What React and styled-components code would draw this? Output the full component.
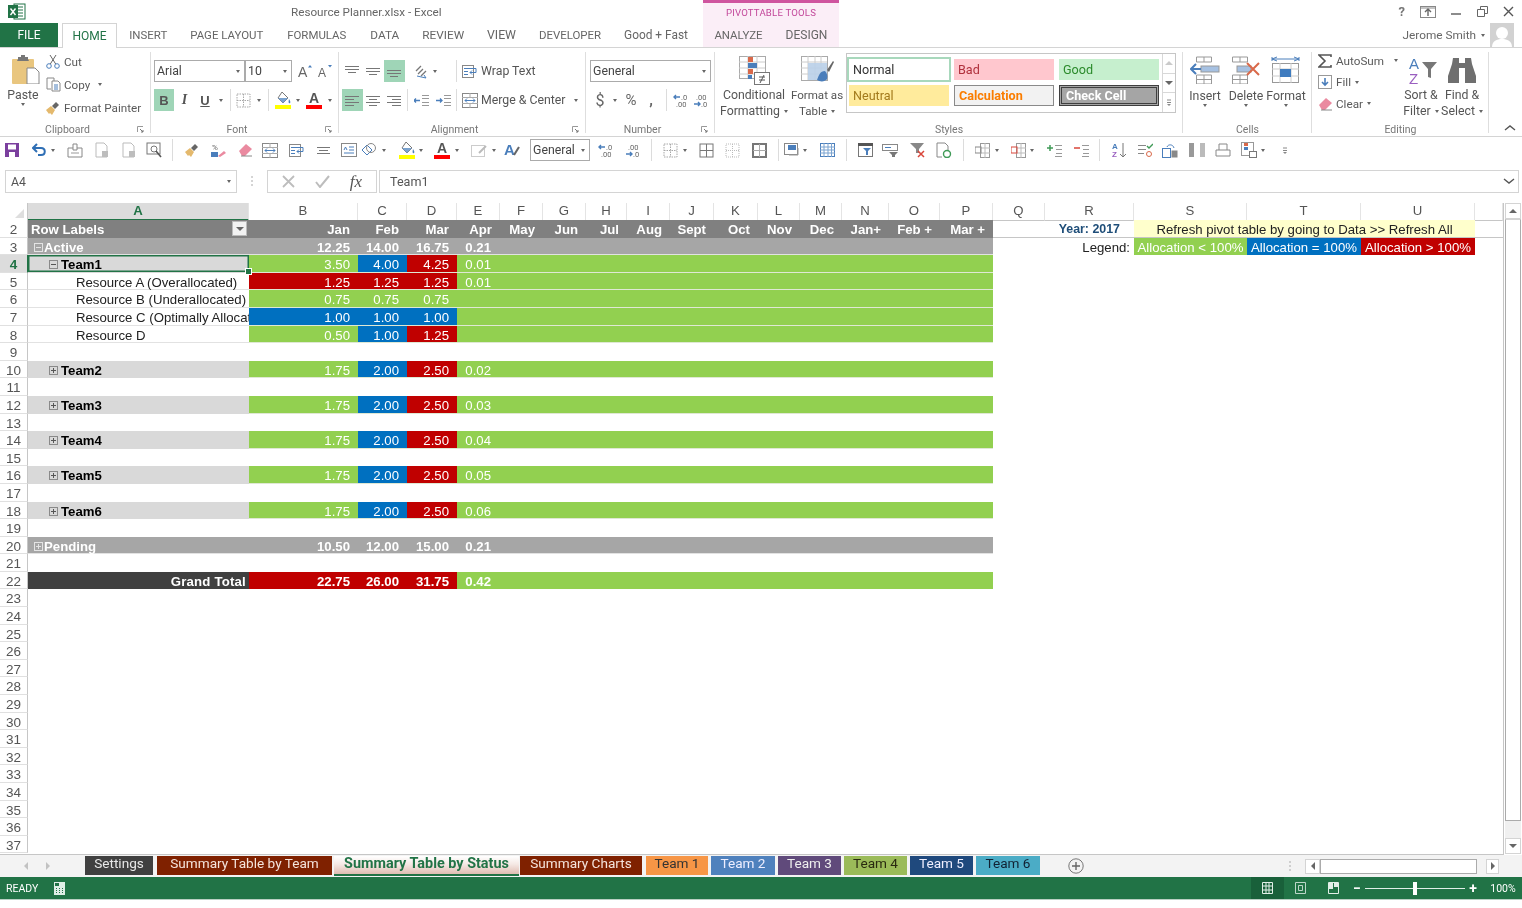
import React from 'react'
import styled, { createGlobalStyle } from 'styled-components'

const GREEN = '#217346'
const UI = '"Roboto", "Liberation Sans", sans-serif'
const CELL = '"Liberation Sans", Arial, sans-serif'
const LINE = '#d4d4d4'
const INK = '#5a5a5a'
const BLUE = '#4a7ebb'

const Global = createGlobalStyle`
  html, body { margin:0; padding:0; background:#fff; overflow:hidden; }
  * { box-sizing:border-box; }
`

const Window = styled.div`
  width:1522px;
  height:908px;
  display:flex;
  flex-direction:column;
  background:#fff;
  font-family:${UI};
  font-size:12px;
  color:${INK};
  overflow:hidden;
  filter:blur(.35px);
`

/* ---------- title + tabs ---------- */
const TitleBar = styled.div`
  height:23px;
  display:flex;
  align-items:center;
`
const AppLogo = styled.div`
  width:291px;
  padding-left:8px;
`
const Title = styled.div`
  width:412px;
  font-size:11.7px;
  color:#666;
`
const PivotLabel = styled.div`
  width:136px;
  height:23px;
  background:#fbeef7;
  border-top:3px solid #cf559f;
  color:#c2479a;
  font-size:9.6px;
  letter-spacing:.2px;
  text-align:center;
  line-height:19px;
`
const WinControls = styled.div`
  margin-left:auto;
  display:flex;
  align-items:center;
  gap:15px;
  padding-right:8px;
`
const HelpMark = styled.span`
  font-weight:700;
  font-size:13px;
  color:#777;
`
const TabBar = styled.div`
  height:25px;
  display:flex;
  border-bottom:1px solid ${LINE};
`
const FileTab = styled.div`
  width:58px;
  height:24px;
  background:${GREEN};
  color:#fff;
  font-size:12px;
  display:flex;
  align-items:center;
  justify-content:center;
  margin-right:4px;
`
const HomeTab = styled.div`
  width:55px;
  height:25px;
  background:#fff;
  color:${GREEN};
  border:1px solid ${LINE};
  border-bottom:0;
  font-size:12px;
  display:flex;
  align-items:center;
  justify-content:center;
  margin-right:1px;
`
const Tab = styled.div`
  width:${p => p.$w}px;
  flex:none;
  text-align:center;
  font-size:${p => p.$fs || 11.45}px;
  line-height:24px;
  white-space:nowrap;
  color:#666;
`
const ContextTabs = styled.div`
  display:flex;
  width:136px;
  height:24px;
  margin-left:3.5px;
  background:#fbeef7;
`
const UserBox = styled.div`
  margin-left:auto;
  display:flex;
  align-items:center;
  gap:5px;
  padding-right:8px;
  height:24px;
  color:#666;
  font-size:11.8px;
`
const Avatar = styled.div`
  width:24px;
  height:24px;
  background:#d2d2d2;
`

/* ---------- ribbon ---------- */
const Ribbon = styled.div`
  height:89px;
  display:flex;
  border-bottom:1px solid ${LINE};
`
const Group = styled.div`
  width:${p => p.$w}px;
  display:flex;
  flex-direction:column;
  position:relative;
  &::after {
    content:'';
    position:absolute;
    right:0;
    top:4px;
    bottom:3px;
    width:1px;
    background:#dedede;
  }
`
const GroupBody = styled.div`
  flex:1;
  display:flex;
  padding-left:${p => p.$pad || 0}px;
  min-height:0;
`
const GroupFoot = styled.div`
  height:17px;
  display:flex;
  align-items:flex-start;
  padding-right:${p => (p.$launch ? 1 : 0)}px;
`
const GroupLabel = styled.div`
  flex:1;
  text-align:center;
  font-size:10.5px;
  padding-top:3.5px;
  line-height:13px;
  color:#777;
`
const Launcher = styled.div`
  width:15px;
  padding-top:7px;
  padding-left:2px;
`
const Stack = styled.div`
  display:flex;
  flex-direction:column;
  gap:7px;
  padding-top:12px;
`
const ToolRow = styled.div`
  height:22px;
  display:flex;
  align-items:center;
`
const Slot = styled.div`
  width:${p => p.$w}px;
  height:22px;
  flex:none;
  margin-left:${p => p.$ml || 0}px;
  display:flex;
  align-items:center;
  justify-content:center;
  background:${p => (p.$on ? '#9fd5b7' : 'transparent')};
  color:#555;
`
const Sep = styled.div`
  width:1px;
  height:22px;
  background:#dcdcdc;
`
const Caret = styled.span`
  display:inline-block;
  width:0;
  height:0;
  flex:none;
  margin-left:${p => p.$ml || 0}px;
  border-left:2.5px solid transparent;
  border-right:2.5px solid transparent;
  border-top:3px solid #666;
  vertical-align:middle;
`
const Select = styled.div`
  width:${p => p.$w}px;
  height:${p => p.$h || 22}px;
  flex:none;
  border:1px solid #ababab;
  background:#fff;
  color:#444;
  display:flex;
  align-items:center;
  justify-content:space-between;
  padding:0 4px 0 2px;
  font-size:12.3px;
`
const Bold = styled.span`
  font-family:${CELL};
  font-size:13px;
  font-weight:700;
  color:#555;
`
const Ital = styled(Bold)`
  font-style:italic;
  font-family:"Liberation Serif", serif;
  font-size:14px;
`
const Under = styled(Bold)`
  text-decoration:underline;
`
const Symbol = styled.span`
  font-size:${p => p.$s || 14}px;
  font-weight:${p => p.$b || 400};
  color:#666;
`
const ToolText = styled.span`
  white-space:nowrap;
  color:#555;
  font-size:12.3px;
`
const BigButton = styled.div`
  width:${p => p.$w}px;
  flex:none;
  display:flex;
  flex-direction:column;
  align-items:center;
  padding-top:${p => p.$top ?? 8}px;
  font-size:${p => p.$fs || 12.3}px;
  line-height:16px;
  color:#555;
  white-space:nowrap;
`
const BigIcon = styled.div`
  height:${p => p.$h || 30}px;
  margin-bottom:2px;
  margin-left:${p => p.$ml || 0}px;
`
const SmallCol = styled.div`
  display:flex;
  flex-direction:column;
  padding-top:${p => p.$top}px;
  width:${p => p.$w}px;
`
const SmallRow = styled.div`
  height:${p => p.$h || 22}px;
  display:flex;
  align-items:center;
  gap:4px;
  white-space:nowrap;
  font-size:11.7px;
`
const SmallIcon = styled.div`
  width:14px;
  flex:none;
  display:flex;
  justify-content:center;
`
const Gallery = styled.div`
  width:330px;
  height:60px;
  margin:5px 0 0 5px;
  border:1px solid #c6c6c6;
  display:flex;
  justify-content:space-between;
  padding:5px 0 0 2px;
`
const StyleGrid = styled.div`
  display:grid;
  grid-template-columns:repeat(3,100px);
  grid-auto-rows:21px;
  gap:5px;
`
const StyleCell = styled.div`
  background:${p => p.$bg};
  color:${p => p.$color};
  font-weight:${p => (p.$bold ? 700 : 400)};
  border:${p => p.$border || 'none'};
  outline:${p => p.$outline || 'none'};
  font-size:12.6px;
  display:flex;
  align-items:center;
  padding-left:4px;
`
const GalleryScroll = styled.div`
  width:13px;
  margin:-5px 0 0 0;
  display:flex;
  flex-direction:column;
  border-left:1px solid #d8d8d8;
`
const GalleryStep = styled.div`
  flex:1;
  display:flex;
  align-items:center;
  justify-content:center;
  border-bottom:1px solid #d8d8d8;
  &:last-child { border-bottom:0; }
`
const CollapseBox = styled.div`
  flex:1;
  display:flex;
  align-items:flex-end;
  justify-content:center;
  padding:0 0 4px 9px;
`

/* ---------- quick access ---------- */
const Qat = styled.div`
  height:26px;
  display:flex;
  align-items:center;
`
const QatItem = styled.div`
  width:${p => p.$w}px;
  margin-left:${p => p.$ml}px;
  flex:none;
  display:flex;
  align-items:center;
  justify-content:center;
`

/* ---------- formula bar ---------- */
const FormulaBar = styled.div`
  height:23px;
  margin-top:7px;
  padding:0 3px 0 5px;
  display:flex;
  align-items:stretch;
`
const NameBox = styled.div`
  width:232px;
  border:1px solid ${LINE};
  display:flex;
  align-items:center;
  justify-content:space-between;
  padding:0 5px;
  font-size:12.3px;
  color:#555;
`
const Grip = styled.div`
  width:30px;
  display:flex;
  align-items:center;
  justify-content:center;
`
const FormulaBtns = styled.div`
  width:110px;
  border:1px solid ${LINE};
  display:flex;
  align-items:center;
  justify-content:space-around;
  padding:0 4px;
`
const FxMark = styled.span`
  font-family:"Liberation Serif", serif;
  font-style:italic;
  font-size:17px;
  color:#555;
`
const FormulaInput = styled.div`
  flex:1;
  margin-left:2px;
  border:1px solid ${LINE};
  display:flex;
  align-items:center;
  justify-content:space-between;
  padding:0 3px 0 10px;
  font-size:12.6px;
  color:#555;
`

/* ---------- sheet ---------- */
const SheetWrap = styled.div`
  height:652px;
  margin-top:10px;
  display:flex;
`
const Sheet = styled.div`
  width:1504px;
  border-right:1px solid #c6c6c6;
  border-bottom:1px solid #c6c6c6;
  font-family:${CELL};
  font-size:13.2px;
`
const colWidths = [221,109,49,50,43,43,43,41,43,44,44,42,42,47,51,53,52,89,113,114,114,28]
const template = `28px ${colWidths.map(w => w + 'px').join(' ')}`

const HeadRow = styled.div`
  display:grid;
  grid-template-columns:${template};
  height:17px;
`
const ColHead = styled.div`
  border-right:1px solid #e4e4e4;
  border-bottom:${p => (p.$active ? `2px solid ${GREEN}` : '1px solid #c6c6c6')};
  background:${p => (p.$active ? '#dcdcdc' : '#fff')};
  color:${p => (p.$active ? GREEN : '#555')};
  font-weight:${p => (p.$active ? 700 : 400)};
  text-align:center;
  line-height:16px;
`
const Corner = styled.div`
  border-right:1px solid #c6c6c6;
  border-bottom:1px solid #c6c6c6;
  display:flex;
  justify-content:flex-end;
  align-items:flex-end;
  padding:0 3px 2px 0;
`
const Row = styled.div`
  display:grid;
  grid-template-columns:${template};
  grid-template-rows:17.6px;
  height:17.6px;
`
const RowHead = styled.div`
  border-right:1px solid ${p => (p.$active ? GREEN : '#c6c6c6')};
  border-bottom:1px solid #e0e0e0;
  background:${p => (p.$active ? '#dcdcdc' : '#fff')};
  color:${p => (p.$active ? GREEN : '#555')};
  font-weight:${p => (p.$active ? 700 : 400)};
  font-size:13.5px;
  text-align:center;
  line-height:19px;
  overflow-x:clip;
`
const Cell = styled.div`
  position:relative;
  background:${p => p.$bg || 'transparent'};
  color:${p => p.$color || '#333'};
  font-weight:${p => (p.$bold ? 700 : 400)};
  font-size:${p => (p.$fs ? `${p.$fs}px` : 'inherit')};
  text-align:${p => p.$align || 'right'};
  padding:${p => (p.$align === 'left' ? `0 0 0 ${p.$indent || 3}px` : p.$align === 'center' ? '0' : `0 ${p.$pr ?? 8}px 0 0`)};
  border-bottom:1px solid ${p => p.$rule || 'transparent'};
  grid-column:${p => (p.$span ? `span ${p.$span}` : 'auto')};
  line-height:19.5px;
  white-space:nowrap;
  overflow-x:clip;
  letter-spacing:${p => p.$ls || 0}px;
`
const LabelCell = styled(Cell)`
  display:flex;
  align-items:flex-start;
  gap:${p => p.$gap ?? 3}px;
  overflow-x:${p => (p.$sel ? 'visible' : 'clip')};
  box-shadow:${p => (p.$sel ? `inset 0 0 0 1.5px ${GREEN}` : 'none')};
  z-index:${p => (p.$sel ? 2 : 0)};
  &::after {
    content:${p => (p.$sel ? "''" : 'none')};
    position:absolute;
    right:-3px;
    bottom:-3px;
    width:5px;
    height:5px;
    background:${GREEN};
    border:1px solid #fff;
  }
`
const Toggle = styled.span`
  width:9px;
  height:9px;
  margin-top:5px;
  flex:none;
  border:1px solid ${p => p.$c || '#8a8a8a'};
  display:flex;
  align-items:center;
  justify-content:center;
  position:relative;
  &::before {
    content:'';
    width:5px;
    height:1px;
    background:${p => p.$c || '#555'};
  }
  &::after {
    content:${p => (p.$plus ? "''" : 'none')};
    position:absolute;
    width:1px;
    height:5px;
    background:${p => p.$c || '#555'};
  }
`
const FilterBtn = styled.span`
  position:absolute;
  right:2px;
  top:1px;
  width:15px;
  height:15px;
  background:#f2f2f2;
  border:1px solid #bbb;
  display:flex;
  align-items:center;
  justify-content:center;
`

const VScroll = styled.div`
  margin-left:1px;
  width:16px;
  height:651px;
  display:flex;
  flex-direction:column;
  background:#f0f0f0;
`
const ScrollBtn = styled.div`
  width:${p => p.$w || 16}px;
  height:${p => p.$h || 16}px;
  margin-left:${p => p.$ml || 0}px;
  flex:none;
  border:1px solid #d4d4d4;
  background:#fff;
  display:flex;
  align-items:center;
  justify-content:center;
`
const VThumb = styled.div`
  height:602px;
  flex:none;
  background:#fff;
  border:1px solid #ababab;
  border-top:1px solid #d4d4d4;
  margin-bottom:auto;
`
const Tri = styled.span`
  width:0;
  height:0;
  border-left:${p => (p.$dir === 'r' ? '4px solid #666' : p.$dir === 'l' ? '0' : '4px solid transparent')};
  border-right:${p => (p.$dir === 'l' ? '4px solid #666' : p.$dir === 'r' ? '0' : '4px solid transparent')};
  border-top:${p => (p.$dir === 'd' ? '4px solid #666' : p.$dir === 'u' ? '0' : '4px solid transparent')};
  border-bottom:${p => (p.$dir === 'u' ? '4px solid #666' : p.$dir === 'd' ? '0' : '4px solid transparent')};
  opacity:${p => (p.$dim ? 0.35 : 1)};
`

/* ---------- sheet tabs ---------- */
const SheetTabs = styled.div`
  height:22px;
  background:#f3f3f3;
  display:flex;
  align-items:flex-start;
  padding-top:1px;
`
const TabNav = styled.div`
  width:85px;
  height:20px;
  display:flex;
  align-items:center;
  justify-content:center;
  gap:18px;
  padding-right:12px;
`
const SheetTab = styled.div`
  width:${p => p.$w}px;
  margin-right:${p => p.$gap ?? 3}px;
  height:${p => (p.$active ? 20 : 19)}px;
  flex:none;
  background:${p => p.$bg};
  color:${p => p.$color};
  font-weight:${p => (p.$active ? 700 : 400)};
  border-bottom:${p => (p.$active ? `2px solid ${GREEN}` : '0')};
  font-size:${p => (p.$active ? 14.4 : 13.6)}px;
  text-align:center;
  line-height:15px;
  white-space:nowrap;
`
const AddSheet = styled.div`
  margin-left:25px;
  width:16px;
  height:20px;
  display:flex;
  align-items:center;
`
const HScrollArea = styled.div`
  margin-left:auto;
  display:flex;
  align-items:center;
  height:20px;
  padding-right:23px;
`
const HThumb = styled.div`
  width:157px;
  height:15px;
  background:#fff;
  border:1px solid #ababab;
`

/* ---------- status bar ---------- */
const StatusBar = styled.div`
  height:23px;
  background:${GREEN};
  border-bottom:1px solid #b9cfc3;
  color:#fff;
  display:flex;
  align-items:center;
  font-size:10.5px;
  padding-left:6px;
`
const ReadyText = styled.span`
  width:48px;
`
const ViewBtn = styled.div`
  width:33px;
  height:22px;
  display:flex;
  align-items:center;
  justify-content:center;
  background:${p => (p.$on ? '#19603a' : 'transparent')};
`
const ViewGroup = styled.div`
  display:flex;
  margin-right:2px;
`
const StatusRight = styled.div`
  margin-left:auto;
  display:flex;
  align-items:center;
  height:22px;
`
const ZoomSign = styled.span`
  width:10px;
  font-size:14px;
  font-weight:700;
  text-align:center;
`
const ZoomTrack = styled.div`
  width:100px;
  height:1px;
  margin:0 3px;
  background:#dfeee6;
  position:relative;
  &::after {
    content:'';
    position:absolute;
    left:48px;
    top:-6px;
    width:4px;
    height:13px;
    background:#fff;
  }
`
const ZoomLabel = styled.span`
  width:38px;
  margin-left:6px;
  text-align:center;
  font-size:10.5px;
`

/* ---------- icons ---------- */
const Svg = styled.svg`
  display:block;
  flex:none;
`
const S = ({ w = 16, h = 16, children }) => (
  <Svg width={w} height={h} viewBox={`0 0 ${w} ${h}`} fill="none">{children}</Svg>
)
const L = '#a8a8a8'

const ExcelLogo = () => (
  <S w={18} h={17}>
    <rect x="6" y="1" width="11" height="15" fill="#fff" stroke={GREEN} />
    <path d="M10 4h5M10 7h5M10 10h5M10 13h5" stroke={GREEN} />
    <rect x="0" y="2" width="10" height="13" fill={GREEN} />
    <path d="M2.5 5.5l5 6.5M7.5 5.5l-5 6.5" stroke="#fff" strokeWidth="1.4" />
  </S>
)
const PasteIcon = () => (
  <S w={29} h={30}>
    <rect x="0" y="5" width="22" height="25" rx="1" fill="#e9c67f" />
    <path d="M6 5V3h3V1h4v2h3v2l1 2H5z" fill="#777" />
    <path d="M15 14h8l4 4v12H15z" fill="#fff" stroke="#888" />
  </S>
)
const ScissorsIcon = () => (
  <S w={14} h={15}>
    <circle cx="3" cy="12" r="2.3" stroke={BLUE} />
    <circle cx="11" cy="12" r="2.3" stroke={BLUE} />
    <path d="M4.3 10L10 1M9.7 10L4 1" stroke="#666" />
  </S>
)
const CopyIcon = () => (
  <S w={15} h={15}>
    <path d="M1 1h7v3M1 1v11h4" stroke="#888" />
    <path d="M6 4h6l2 2v8H6z" fill="#fff" stroke="#888" />
    <path d="M8 8h4M8 10h4M8 12h4" stroke={BLUE} />
  </S>
)
const PainterIcon = () => (
  <S w={14} h={14}>
    <path d="M0 9l5-4 4 4-3 5-2-2-1 1z" fill="#e4b96d" />
    <path d="M6 5l4-4 3 3-4 4z" fill="#666" />
  </S>
)
const Launch = () => (
  <S w={7} h={7}>
    <path d="M0.5 6V0.5H6" stroke="#999" />
    <path d="M3 3l3 3M6 4v2H4" stroke="#777" />
  </S>
)
const FontSizeA = ({ size, shrink }) => (
  <S w={15} h={18}>
    <text x="0" y="15" fontFamily={CELL} fontSize={size} fill="#666">A</text>
    <path d={shrink ? 'M10 3h4l-2 2.500z' : 'M10 5.500h4L12 3z'} fill={BLUE} />
  </S>
)
const Borders = ({ c = L, dash = '1.5 1' }) => (
  <S w={15} h={15}>
    <rect x="1" y="1" width="13" height="13" stroke={c} strokeDasharray={dash} />
    <path d="M7.5 1v13M1 7.5h13" stroke={c} strokeDasharray={dash} />
  </S>
)
const SolidGrid = ({ c = '#777', thick }) => (
  <S w={15} h={15}>
    <rect x="1" y="1" width="13" height="13" stroke={c} strokeWidth={thick ? 2 : 1} />
    <path d="M7.5 1v13M1 7.5h13" stroke={thick ? '#aaa' : c} />
  </S>
)
const FillIcon = () => (
  <S w={17} h={18}>
    <path d="M7 1l6 6-5 5-5-5z" fill="#fff" stroke="#777" />
    <path d="M3 7h10l-5 5z" fill="#7aa2cf" />
    <path d="M14 8c1 2 2 3 1 4s-2 0-1-4z" fill={BLUE} />
    <rect x="0" y="14" width="16" height="4" fill="#ffff00" />
  </S>
)
const FontColor = () => (
  <S w={16} h={18}>
    <text x="8" y="12" textAnchor="middle" fontFamily={CELL} fontSize="14" fontWeight="700" fill="#555">A</text>
    <rect x="0" y="14" width="16" height="4" fill="#f00" />
  </S>
)
const Lines = ({ ys, x1 = 0, x2 = 14 }) => (
  <S w={15} h={15}>
    <path d={ys.map(([y, a, b]) => `M${a ?? x1} ${y}.5H${b ?? x2}`).join('')} stroke="#777" />
  </S>
)
const AlignV = ({ at }) => <Lines ys={[at, at + 3, at + 6].map((y, i) => [y, i === 2 ? 3 : 0, i === 2 ? 11 : 14])} />
const AlignH = ({ mode }) => {
  const rows = [3, 6, 9, 12].map((y, i) => {
    if (i % 2 === 0) return [y, 0, 14]
    if (mode === 'l') return [y, 0, 9]
    if (mode === 'r') return [y, 5, 14]
    return [y, 3, 11]
  })
  return <Lines ys={rows} />
}
const OrientIcon = () => (
  <S w={16} h={15}>
    <path d="M2 7l5-5M4 10l5-5M7 12l5-5" stroke="#777" strokeWidth="1.3" />
    <path d="M3 12l9 2-2-3" stroke={BLUE} />
  </S>
)
const WrapIcon = () => (
  <S w={16} h={15}>
    <rect x="0.5" y="1.5" width="11" height="12" stroke="#888" />
    <path d="M2 4.5h12v4H8M2 7.5h4M2 10.5h4" stroke={BLUE} />
    <path d="M10 6.5l-2 2 2 2" stroke={BLUE} />
  </S>
)
const MergeIcon = () => (
  <S w={16} h={15}>
    <rect x="0.5" y="0.5" width="15" height="14" stroke="#888" />
    <path d="M0 4.5h16M0 10.5h16M8 0v4M8 11v4" stroke="#aaa" />
    <path d="M3 7.5h10M5 5.5l-2 2 2 2M11 5.5l2 2-2 2" stroke={BLUE} />
  </S>
)
const IndentIcon = ({ flip }) => (
  <S w={15} h={13}>
    <path d="M8 1.5h7M8 4.5h7M8 8.5h7M8 11.5h7" stroke="#999" />
    {flip
      ? <path d="M0 6.5h6M4 4.5l2 2-2 2" stroke={BLUE} strokeWidth="1.3" />
      : <path d="M6 6.5H0M2 4.5l-2 2 2 2" stroke={BLUE} strokeWidth="1.3" />}
  </S>
)
const IncDec = () => (
  <S w={16} h={15}>
    <text x="8" y="6.500" fontFamily={UI} fontSize="7.5" fill="#666">.0</text>
    <text x="3" y="14" fontFamily={UI} fontSize="7.5" fill="#666">.00</text>
    <path d="M7 4H1M3 2L1 4l2 2" stroke={BLUE} strokeWidth="1.4" />
  </S>
)
const DecDec = () => (
  <S w={16} h={15}>
    <text x="3" y="6.500" fontFamily={UI} fontSize="7.5" fill="#666">.00</text>
    <text x="8" y="14" fontFamily={UI} fontSize="7.5" fill="#666">.0</text>
    <path d="M1 11h6M5 9l2 2-2 2" stroke={BLUE} strokeWidth="1.4" />
  </S>
)
const CondFormat = () => (
  <S w={31} h={29}>
    <rect x="0.5" y="0.5" width="26" height="22" fill="#fff" stroke="#aaa" />
    <path d="M9 0v22M18 0v22M0 6h26M0 12h26M0 18h26" stroke="#ccc" />
    <rect x="9" y="1" width="5" height="5" fill="#d9694a" />
    <rect x="9" y="7" width="9" height="5" fill={BLUE} />
    <rect x="9" y="13" width="5" height="5" fill="#d9694a" />
    <rect x="9" y="19" width="4" height="4" fill={BLUE} />
    <rect x="15.5" y="16.5" width="15" height="12" fill="#fff" stroke="#777" />
    <path d="M20 21h6M20 24h6M25 19l-4 8" stroke="#555" />
  </S>
)
const FormatTable = () => (
  <S w={33} h={29}>
    <rect x="0.5" y="0.5" width="26" height="24" fill="#fff" stroke="#aaa" />
    <path d="M7 0v24M14 0v24M20 0v24M0 6h26M0 12h26M0 18h26" stroke="#ccc" />
    <rect x="7" y="7" width="19" height="17" fill="#b9cfe8" opacity=".9" />
    <path d="M26 14l6-9 1 1-5 10z" fill="#666" />
    <path d="M24 15c-5 0-6 4-8 9 3 2 8 2 10-1 1-3 0-6-2-8z" fill={BLUE} />
  </S>
)
const CellsInsert = () => (
  <S w={30} h={28}>
    <path d="M6.5 1h15v5h-15zM14 1v5M6.5 19h15v9h-15zM14 19v9M6.5 23.5h15" stroke="#999" />
    <rect x="11" y="10" width="18" height="6" fill="#a6c1e2" stroke="#999" />
    <path d="M1 13h10M6 8l-5 5 5 5" stroke={BLUE} strokeWidth="2" />
  </S>
)
const CellsDelete = () => (
  <S w={30} h={28}>
    <path d="M1.5 1h15v5h-15zM9 1v5M1.5 19h15v9h-15zM9 19v9M1.5 23.5h15" stroke="#999" />
    <rect x="6" y="10" width="14" height="6" fill="#a6c1e2" stroke="#999" />
    <path d="M16 7l12 12M28 7L16 19" stroke="#d9694a" strokeWidth="2" />
  </S>
)
const CellsFormat = () => (
  <S w={30} h={30}>
    <path d="M1 3h27M1 1v4M28 1v4M6 1L1 3l5 2M23 1l5 2-5 2" stroke={BLUE} />
    <rect x="1.5" y="7.5" width="26" height="19" fill="#fff" stroke="#999" />
    <path d="M9 7v20M20 7v20M1 13h27M1 20h27" stroke="#ccc" />
    <rect x="9" y="13" width="11" height="8" fill="#3f7cbf" />
  </S>
)
const Sigma = () => (
  <S w={14} h={14}>
    <path d="M13 3V1H1l6 6-6 6h12v-2" stroke="#555" strokeWidth="1.6" />
  </S>
)
const FillDown = () => (
  <S w={14} h={14}>
    <rect x="0.5" y="0.5" width="13" height="13" stroke="#999" />
    <path d="M7 3v7M4 7l3 3 3-3" stroke={BLUE} strokeWidth="1.6" />
  </S>
)
const Eraser = () => (
  <S w={15} h={14}>
    <path d="M1 8l7-7 6 5-7 7H4z" fill="#ea8aa0" />
    <path d="M3 13h11" stroke="#888" />
  </S>
)
const SortFilter = () => (
  <S w={30} h={30}>
    <text x="1" y="12.500" fontFamily={CELL} fontSize="15" fill={BLUE}>A</text>
    <text x="1" y="28" fontFamily={CELL} fontSize="15" fill="#9a5fc0">Z</text>
    <path d="M14 6h15l-6 7v9l-3-1v-8z" fill="#777" />
  </S>
)
const Binoculars = () => (
  <S w={28} h={28}>
    <path d="M5 2h6v5h6V2h6l1 6 4 12v7H17V12h-6v15H0v-7l4-12z" fill="#6f6f6f" />
  </S>
)
const Chevron = ({ d = 'M1 5l5-4 5 4' }) => (
  <S w={12} h={7}><path d={d} stroke="#555" strokeWidth="1.4" /></S>
)
const SaveIcon = () => (
  <S w={14} h={14}>
    <path d="M0 0h14v14H0z" fill="#7b3f9e" />
    <rect x="3" y="1.5" width="8" height="5" fill="#fff" />
    <rect x="4" y="9" width="6" height="5" fill="#fff" />
  </S>
)
const UndoIcon = () => (
  <S w={15} h={14}>
    <path d="M2 5h7c5 0 5 7 0 7H6" stroke="#2f6fb5" strokeWidth="2" />
    <path d="M5 1L1 5l4 4" stroke="#2f6fb5" strokeWidth="2" />
  </S>
)
const ClipDoc = () => (
  <S w={16} h={15}>
    <path d="M1 5h14v9H1z" stroke="#888" />
    <path d="M6 1h4v6H6z" fill="#fff" stroke="#888" />
    <path d="M4 10h8" stroke="#999" />
  </S>
)
const PageDim = () => (
  <S w={14} h={16}>
    <path d="M1 1h8l3 3v11H1z" stroke="#bbb" fill="#fff" />
    <rect x="7" y="9" width="6" height="6" fill="#bdbdbd" />
  </S>
)
const Preview = () => (
  <S w={16} h={16}>
    <rect x="1" y="1" width="13" height="11" stroke="#777" />
    <circle cx="8" cy="7" r="3" stroke="#777" />
    <path d="M10 9l5 6" stroke="#555" strokeWidth="1.6" />
  </S>
)
const ClearPct = () => (
  <S w={16} h={15}>
    <text x="2" y="7" fontFamily={UI} fontSize="8" fill="#666">%</text>
    <rect x="1" y="9" width="7" height="5" fill={BLUE} />
    <path d="M8 13l6-5 2 2-6 4z" fill="#ea8aa0" />
  </S>
)
const CenterLines = () => <Lines ys={[[4, 1, 14], [7, 3, 12], [10, 1, 14]]} />
const TextBoxIcon = () => (
  <S w={16} h={14}>
    <rect x="0.5" y="0.5" width="15" height="13" stroke="#888" />
    <path d="M8 4h5M8 7h5M3 10h10M3 7l1.5-3L6 7" stroke={BLUE} />
  </S>
)
const Shapes = () => (
  <S w={16} h={16}>
    <path d="M1 8l5-5 5 5-5 5z" stroke={BLUE} />
    <circle cx="10" cy="6" r="4.5" stroke="#888" />
  </S>
)
const PenGray = () => (
  <S w={18} h={13}>
    <rect x="0.5" y="1.5" width="13" height="11" stroke="#ccc" />
    <path d="M8 9l7-7" stroke="#bbb" strokeWidth="2" />
  </S>
)
const StyleA = () => (
  <S w={16} h={16}>
    <text x="0" y="13" fontFamily={CELL} fontSize="15" fontWeight="700" fill={BLUE}>A</text>
    <path d="M10 13l5-8" stroke="#666" strokeWidth="2" />
  </S>
)
const SheetDrop = () => (
  <S w={16} h={14}>
    <rect x="0.5" y="0.5" width="13" height="11" stroke="#888" />
    <rect x="4" y="2" width="8" height="5" fill={BLUE} />
    <path d="M5 12h9V5" stroke="#999" />
  </S>
)
const BlueGrid = () => (
  <S w={15} h={14}>
    <rect x="0.5" y="0.5" width="14" height="13" stroke={BLUE} />
    <path d="M0 4h15M0 7h15M0 10h15M4 0v14M8 0v14M11.500 0v14" stroke="#7ba3d0" />
  </S>
)
const PivotIcon = () => (
  <S w={15} h={14}>
    <rect x="0.5" y="0.5" width="14" height="13" fill="#fff" stroke="#777" />
    <rect x="0" y="0" width="15" height="3" fill="#555" />
    <path d="M5 5h8l-3 3v4H8V8z" fill={BLUE} />
  </S>
)
const SlicerIcon = () => (
  <S w={16} h={14}>
    <rect x="0.5" y="1.5" width="15" height="6" stroke="#888" />
    <path d="M3 4.500h6" stroke={BLUE} />
    <path d="M7 9h9l-3 3v2h-3v-2z" fill="#777" />
  </S>
)
const FilterX = () => (
  <S w={16} h={16}>
    <path d="M0 1h14L9 7v4H6V7z" fill="#888" />
    <path d="M8 9l6 6M14 9l-6 6" stroke="#d9463a" strokeWidth="1.5" />
  </S>
)
const RefreshDoc = () => (
  <S w={16} h={16}>
    <path d="M1 1h8l3 3v4M1 1v14h5" stroke="#888" />
    <circle cx="11" cy="12" r="3.5" stroke="#3f9a57" strokeWidth="1.4" />
  </S>
)
const InsColumn = ({ red }) => (
  <S w={15} h={15}>
    <rect x="5.5" y="0.5" width="9" height="14" stroke="#999" fill="#fff" />
    <path d="M5 5h10M5 10h10M10 0v15" stroke="#bbb" />
    <rect x="0" y="4" width="6" height="6" stroke={red ? '#d9463a' : '#888'} />
  </S>
)
const PlusLines = ({ minus }) => (
  <S w={15} h={13}>
    <path d="M8 1.500h7M9 5.500h6M9 9.500h6M8 12.500h7" stroke="#999" />
    <path d={minus ? 'M0 4h6' : 'M0 4h6M3 1v6'} stroke={minus ? '#d9463a' : '#3f9a57'} strokeWidth="1.5" />
  </S>
)
const SortAZ = () => (
  <S w={15} h={16}>
    <text x="0" y="7" fontFamily={CELL} fontSize="8" fontWeight="700" fill={BLUE}>A</text>
    <text x="0" y="15" fontFamily={CELL} fontSize="8" fontWeight="700" fill="#9a5fc0">Z</text>
    <path d="M11 1v14M8 12l3 3 3-3" stroke="#777" />
  </S>
)
const CheckList = () => (
  <S w={15} h={14}>
    <path d="M0 2.500h8M0 6.500h8M0 10.500h6" stroke="#888" />
    <path d="M9 3l2 2 4-4" stroke="#3f9a57" strokeWidth="1.4" />
    <circle cx="11" cy="11" r="2.500" stroke="#d9694a" />
  </S>
)
const GroupDoc = () => (
  <S w={16} h={15}>
    <rect x="0.500" y="5.500" width="8" height="9" stroke={BLUE} />
    <rect x="9.500" y="7.500" width="6" height="7" fill="#888" />
    <path d="M5 4c1-3 6-3 7 1" stroke={BLUE} />
  </S>
)
const ColsIcon = () => (
  <S w={16} h={14}>
    <rect x="0" y="0" width="5" height="14" fill="#999" />
    <rect x="11" y="0" width="5" height="14" fill="#bbb" />
  </S>
)
const PrintIcon = () => (
  <S w={16} h={15}>
    <path d="M1 7h14v6H1zM4 7V1h8v6" stroke="#888" />
  </S>
)
const PivotStyle = () => (
  <S w={16} h={16}>
    <rect x="0.500" y="0.500" width="12" height="13" stroke="#999" fill="#fff" />
    <rect x="3" y="1" width="4" height="3" fill="#d9694a" />
    <rect x="3" y="5" width="4" height="3" fill={BLUE} />
    <rect x="8.500" y="9.500" width="7" height="6" fill="#fff" stroke="#777" />
  </S>
)
const TinyMenu = () => (
  <S w={6} h={7}><path d="M1 1h4M1 3.500h4" stroke="#888" /><path d="M1 5l2 2 2-2z" fill="#888" /></S>
)
const Grip3 = () => (
  <S w={3} h={11}><path d="M1 0v2M1 4v2M1 8v2" stroke="#aaa" /></S>
)
const CalcMini = () => (
  <S w={11} h={13}>
    <rect x="0" y="0" width="11" height="13" fill="#dfeee6" />
    <rect x="1" y="1" width="4" height="3" fill={GREEN} />
    <path d="M2 6.500h1M5 6.500h1M8 6.500h1M2 8.500h1M5 8.500h1M8 8.500h1M2 10.500h1M5 10.500h1M8 10.500h1" stroke={GREEN} />
  </S>
)
const ViewGrid = () => (
  <S w={11} h={12}><path d="M.5.5h10v11H.5zM4 0v12M7 0v12M0 4h11M0 8h11" stroke="#e3efe8" /></S>
)
const ViewPage = () => (
  <S w={11} h={12}><path d="M.5.5h10v11H.5z" stroke="#bcd6c8" /><path d="M3.500 3.500h4v5h-4z" stroke="#bcd6c8" /></S>
)
const ViewBreak = () => (
  <S w={11} h={12}><path d="M.5.5h10v11H.5z" stroke="#e3efe8" /><path d="M1 1h4v6H1zM6 1h4v4H6z" fill="#e3efe8" /></S>
)
const WinMax = () => (
  <S w={16} h={12}>
    <rect x="0.500" y="0.500" width="15" height="11" stroke="#888" />
    <path d="M8 10V3M5 6l3-3 3 3" stroke="#666" strokeWidth="1.4" />
    <path d="M1 2h14" stroke="#888" />
  </S>
)
const WinMin = () => <S w={11} h={11}><path d="M0 8h10" stroke="#666" strokeWidth="1.5" /></S>
const WinRestore = () => (
  <S w={11} h={11}><path d="M.5 3.500h7v7h-7zM3.500 3V.5h7v7H8" stroke="#666" /></S>
)
const WinClose = () => <S w={11} h={11}><path d="M1 1l9 9M10 1l-9 9" stroke="#555" strokeWidth="1.4" /></S>
const AvatarSvg = () => (
  <S w={24} h={24}>
    <circle cx="12" cy="10" r="6" fill="#fff" />
    <path d="M2 24c0-6 5-8 10-8s10 2 10 8z" fill="#fff" />
  </S>
)
const PlusCircle = () => (
  <S w={16} h={16}>
    <circle cx="8" cy="8" r="7.200" stroke="#777" />
    <path d="M4 8h8M8 4v8" stroke="#666" strokeWidth="1.4" />
  </S>
)
const CrossGray = () => <S w={13} h={13}><path d="M1 1l11 11M12 1L1 12" stroke="#bdbdbd" strokeWidth="1.8" /></S>
const CheckGray = () => <S w={15} h={13}><path d="M1 7l4 5 9-11" stroke="#bdbdbd" strokeWidth="2" /></S>

/* center x, width, element: turned into margins so the row stays in flow */
const qatLayout = [
  [12, 14, <SaveIcon />], [39, 15, <UndoIcon />], [53, 6, <Caret />], [74.5, 16, <ClipDoc />],
  [102, 14, <PageDim />], [129, 14, <PageDim />], [154, 16, <Preview />], [172, 1, <Sep />],
  [192, 14, <PainterIcon />], [218, 16, <ClearPct />], [245, 15, <Eraser />], [270, 16, <MergeIcon />],
  [297, 16, <WrapIcon />], [323, 15, <CenterLines />], [349, 16, <TextBoxIcon />], [369, 16, <Shapes />],
  [384, 6, <Caret />], [407, 17, <FillIcon />], [421, 6, <Caret />], [442, 16, <FontColor />],
  [457, 6, <Caret />], [480, 18, <PenGray />], [494, 6, <Caret />], [512, 16, <StyleA />],
  [560, 60, <Select $w={60} $h={22}>General<Caret /></Select>], [606, 16, <IncDec />], [633, 16, <DecDec />],
  [651, 1, <Sep />], [670, 15, <Borders />], [685, 6, <Caret />], [706, 15, <SolidGrid />],
  [732, 15, <Borders c="#bbb" dash="1 1" />], [759, 15, <SolidGrid thick />], [778, 1, <Sep />],
  [792, 16, <SheetDrop />], [805, 6, <Caret />], [827, 15, <BlueGrid />], [846, 1, <Sep />],
  [865, 15, <PivotIcon />], [890, 16, <SlicerIcon />], [918, 16, <FilterX />], [944, 16, <RefreshDoc />],
  [963, 1, <Sep />], [982, 15, <InsColumn />], [997, 6, <Caret />], [1018, 15, <InsColumn red />],
  [1032, 6, <Caret />], [1054, 15, <PlusLines />], [1081, 15, <PlusLines minus />], [1099, 1, <Sep />],
  [1119, 15, <SortAZ />], [1145, 15, <CheckList />], [1170, 16, <GroupDoc />], [1197, 16, <ColsIcon />],
  [1223, 16, <PrintIcon />], [1249, 16, <PivotStyle />], [1263, 6, <Caret />], [1285, 6, <TinyMenu />],
]
let qatEnd = 0
const qatItems = qatLayout.map(([c, w, el]) => {
  const left = c - w / 2
  const ml = left - qatEnd
  qatEnd = left + w
  return { ml, w, el }
})

/* sheet data */
const months = ['Jan','Feb','Mar','Apr','May','Jun','Jul','Aug','Sept','Oct','Nov','Dec','Jan+','Feb +','Mar +']
const LIME = '#92d050'
const AZURE = '#0070c0'
const RED = '#c00000'
const colLetters = 'ABCDEFGHIJKLMNOPQRSTU'.split('').concat('')

const teamRow = (n, label, vals, e) => ({ n, kind: 'team', label, vals, e })
const sheetRows = [
  { n: 4, kind: 'team', label: 'Team1', open: true, sel: true, vals: [['3.50', LIME], ['4.00', AZURE], ['4.25', RED]], e: '0.01' },
  { n: 5, kind: 'res', label: 'Resource A (Overallocated)', vals: [['1.25', RED], ['1.25', RED], ['1.25', RED]], e: '0.01' },
  { n: 6, kind: 'res', label: 'Resource B (Underallocated)', vals: [['0.75', LIME], ['0.75', LIME], ['0.75', LIME]] },
  { n: 7, kind: 'res', label: 'Resource C (Optimally Allocated)', vals: [['1.00', AZURE], ['1.00', AZURE], ['1.00', AZURE]] },
  { n: 8, kind: 'res', label: 'Resource D', vals: [['0.50', LIME], ['1.00', AZURE], ['1.25', RED]] },
  { n: 9 },
  ...[2, 3, 4, 5, 6].flatMap(t => [
    teamRow(6 + t * 2, `Team${t}`, [['1.75', LIME], ['2.00', AZURE], ['2.50', RED]], `0.0${t}`),
    { n: 7 + t * 2 },
  ]),
]

const Blanks = ({ from = 0, to = 15, bg, rule }) => (
  <>
    {months.slice(from, to).map(m => <Cell key={m} $bg={bg} $rule={rule} />)}
  </>
)

const DataRow = ({ row }) => {
  const isTeam = row.kind === 'team'
  return (
    <Row>
      <RowHead $active={row.sel}>{row.n}</RowHead>
      {isTeam ? (
        <LabelCell $align="left" $indent={21} $bg="#d9d9d9" $color="#000" $bold $sel={row.sel}>
          <Toggle $plus={!row.open} />{row.label}
        </LabelCell>
      ) : row.kind === 'res' ? (
        <LabelCell $align="left" $indent={48} $color="#222" $rule="#e2e2e2">{row.label}</LabelCell>
      ) : <Cell />}
      {row.vals ? (
        <>
          {row.vals.map(([v, bg], i) => (
            <Cell key={i} $bg={bg} $color="#fff" $rule="#dfe8d4">{v}</Cell>
          ))}
          <Cell $bg={LIME} $color="#fff" $rule="#dfe8d4" $pr={9}>{row.e || ''}</Cell>
          <Blanks from={4} bg={LIME} rule="#dfe8d4" />
        </>
      ) : null}
    </Row>
  )
}

const EmptyRows = ({ from, to }) => (
  <>
    {Array.from({ length: to - from + 1 }, (_, i) => (
      <Row key={i}><RowHead>{from + i}</RowHead></Row>
    ))}
  </>
)

const SummaryRow = ({ n, label, vals, minus }) => (
  <Row>
    <RowHead>{n}</RowHead>
    <LabelCell $align="left" $indent={6} $gap={1} $bg="#a6a6a6" $color="#fff" $bold $rule="#e2e2e2">
      <Toggle $plus={!minus} $c="#e4e4e4" />{label}
    </LabelCell>
    {vals.map((v, i) => <Cell key={i} $bg="#a6a6a6" $color="#fff" $bold $rule="#e2e2e2" $pr={i === 3 ? 9 : 8}>{v}</Cell>)}
    <Blanks from={4} bg="#a6a6a6" rule="#e2e2e2" />
    {n === 3 && (
      <>
        <Cell />
        <Cell $color="#222" $pr={4}>Legend:</Cell>
        <Cell $bg={LIME} $color="#fff" $align="center">Allocation &lt; 100%</Cell>
        <Cell $bg={AZURE} $color="#fff" $align="center">Allocation = 100%</Cell>
        <Cell $bg={RED} $color="#fff" $align="center">Allocation &gt; 100%</Cell>
      </>
    )}
  </Row>
)

const tabsData = [
  { t: 'Settings', w: 68, gap: 4, bg: '#404040', color: '#e8e8e8' },
  { t: 'Summary Table by Team', w: 175, gap: 2, bg: '#7f2100', color: '#f4e4dc' },
  { t: 'Summary Table by Status', w: 185, gap: 1, bg: 'linear-gradient(#fff,#f5e9e5 45%,#e0bdb2)', color: GREEN, active: true },
  { t: 'Summary Charts', w: 122, gap: 4, bg: '#7f2100', color: '#f4e4dc' },
  { t: 'Team 1', w: 62, bg: '#f79646', color: '#333' },
  { t: 'Team 2', w: 64, bg: '#4f81bd', color: '#eef' },
  { t: 'Team 3', w: 63, bg: '#604a7b', color: '#eee' },
  { t: 'Team 4', w: 63, bg: '#9bbb59', color: '#2a2a10' },
  { t: 'Team 5', w: 63, bg: '#1f497d', color: '#eef' },
  { t: 'Team 6', w: 64, bg: '#4bacc6', color: '#123' },
]

const Big = ({ w, icon, lines, caret, h, top, fs, iconMl }) => (
  <BigButton $w={w} $top={top} $fs={fs}>
    <BigIcon $h={h} $ml={iconMl}>{icon}</BigIcon>
    {lines.map((l, i) => <div key={i}>{l}{caret && i === lines.length - 1 && <Caret $ml={4} />}</div>)}
    {lines.length === 1 ? <Caret /> : null}
  </BigButton>
)

const App = () => (
  <Window>
    <Global />
    <TitleBar>
      <AppLogo><ExcelLogo /></AppLogo>
      <Title>Resource Planner.xlsx - Excel</Title>
      <PivotLabel>PIVOTTABLE TOOLS</PivotLabel>
      <WinControls>
        <HelpMark>?</HelpMark>
        <WinMax /><WinMin /><WinRestore /><WinClose />
      </WinControls>
    </TitleBar>
    <TabBar>
      <FileTab>FILE</FileTab>
      <HomeTab>HOME</HomeTab>
      <Tab $w={60.5}>INSERT</Tab>
      <Tab $w={96.5}>PAGE LAYOUT</Tab>
      <Tab $w={83.5}>FORMULAS</Tab>
      <Tab $w={52.5} $fs={11.8}>DATA</Tab>
      <Tab $w={64.5} $fs={11.8}>REVIEW</Tab>
      <Tab $w={52} $fs={12.3}>VIEW</Tab>
      <Tab $w={85}>DEVELOPER</Tab>
      <Tab $w={87} $fs={11.9}>Good + Fast</Tab>
      <ContextTabs>
        <Tab $w={71}>ANALYZE</Tab>
        <Tab $w={65} $fs={12}>DESIGN</Tab>
      </ContextTabs>
      <UserBox>Jerome Smith <Caret /><Avatar><AvatarSvg /></Avatar></UserBox>
    </TabBar>

    <Ribbon>
      <Group $w={151}>
        <GroupBody>
          <Big w={46} top={6} h={31} iconMl={6} icon={<PasteIcon />} lines={['Paste']} />
          <SmallCol $top={3} $w={100}>
            <SmallRow $h={21}><SmallIcon><ScissorsIcon /></SmallIcon>Cut</SmallRow>
            <SmallRow $h={25}><SmallIcon><CopyIcon /></SmallIcon>Copy<Caret $ml={4} /></SmallRow>
            <SmallRow $h={21}><SmallIcon><PainterIcon /></SmallIcon>Format Painter</SmallRow>
          </SmallCol>
        </GroupBody>
        <GroupFoot $launch><GroupLabel>Clipboard</GroupLabel><Launcher><Launch /></Launcher></GroupFoot>
      </Group>

      <Group $w={188}>
        <GroupBody $pad={3}>
          <Stack>
            <ToolRow>
              <Select $w={91}>Arial<Caret /></Select>
              <Select $w={47}>10<Caret /></Select>
              <Slot $w={18} $ml={4}><FontSizeA size={14} /></Slot>
              <Slot $w={18} $ml={2}><FontSizeA size={12} shrink /></Slot>
            </ToolRow>
            <ToolRow>
              <Slot $w={20} $on><Bold>B</Bold></Slot>
              <Slot $w={21}><Ital>I</Ital></Slot>
              <Slot $w={20}><Under>U</Under></Slot>
              <Slot $w={12}><Caret /></Slot>
              <Slot $w={6}><Sep /></Slot>
              <Slot $w={20}><Borders /></Slot>
              <Slot $w={12}><Caret /></Slot>
              <Slot $w={6}><Sep /></Slot>
              <Slot $w={24}><FillIcon /></Slot>
              <Slot $w={6}><Caret /></Slot>
              <Slot $w={26}><FontColor /></Slot>
              <Slot $w={6}><Caret /></Slot>
            </ToolRow>
          </Stack>
        </GroupBody>
        <GroupFoot $launch><GroupLabel>Font</GroupLabel><Launcher><Launch /></Launcher></GroupFoot>
      </Group>

      <Group $w={247}>
        <GroupBody $pad={3}>
          <Stack>
            <ToolRow>
              <Slot $w={21}><AlignV at={2} /></Slot>
              <Slot $w={21}><AlignV at={4} /></Slot>
              <Slot $w={21} $on><AlignV at={6} /></Slot>
              <Slot $w={6} />
              <Slot $w={21}><OrientIcon /></Slot>
              <Slot $w={6}><Caret /></Slot>
              <Slot $w={15} />
              <Slot $w={6}><Sep /></Slot>
              <Slot $w={22}><WrapIcon /></Slot>
              <ToolText>Wrap Text</ToolText>
            </ToolRow>
            <ToolRow>
              <Slot $w={21} $on><AlignH mode="l" /></Slot>
              <Slot $w={21}><AlignH mode="c" /></Slot>
              <Slot $w={21}><AlignH mode="r" /></Slot>
              <Slot $w={5}><Sep /></Slot>
              <Slot $w={23}><IndentIcon /></Slot>
              <Slot $w={20}><IndentIcon flip /></Slot>
              <Slot $w={6}><Sep /></Slot>
              <Slot $w={22}><MergeIcon /></Slot>
              <ToolText>Merge &amp; Center</ToolText>
              <Caret $ml={8} />
            </ToolRow>
          </Stack>
        </GroupBody>
        <GroupFoot $launch><GroupLabel>Alignment</GroupLabel><Launcher><Launch /></Launcher></GroupFoot>
      </Group>

      <Group $w={129}>
        <GroupBody $pad={4}>
          <Stack>
            <ToolRow><Select $w={121}>General<Caret /></Select></ToolRow>
            <ToolRow>
              <Slot $w={20}><Symbol $s={16}>$</Symbol></Slot>
              <Slot $w={10}><Caret /></Slot>
              <Slot $w={22}><Symbol $s={15}>%</Symbol></Slot>
              <Slot $w={18}><Symbol $s={15} $b={700}>,</Symbol></Slot>
              <Slot $w={12}><Sep /></Slot>
              <Slot $w={18}><IncDec /></Slot>
              <Slot $w={22}><DecDec /></Slot>
            </ToolRow>
          </Stack>
        </GroupBody>
        <GroupFoot $launch><GroupLabel>Number</GroupLabel><Launcher><Launch /></Launcher></GroupFoot>
      </Group>

      <Group $w={468}>
        <GroupBody>
          <Big w={78} h={29} icon={<CondFormat />} lines={['Conditional', 'Formatting']} caret />
          <Big w={48} h={29} fs={11.6} icon={<FormatTable />} lines={['Format as', 'Table']} caret />
          <Gallery>
            <StyleGrid>
              <StyleCell $bg="#fff" $color="#333" $outline="2px solid #a8d8bc">Normal</StyleCell>
              <StyleCell $bg="#ffc7ce" $color="#b0303c">Bad</StyleCell>
              <StyleCell $bg="#c6efce" $color="#2b8a2b">Good</StyleCell>
              <StyleCell $bg="#ffeb9c" $color="#a37a1c">Neutral</StyleCell>
              <StyleCell $bg="#f2f2f2" $color="#fa7d00" $bold $border="1px solid #8a8a8a">Calculation</StyleCell>
              <StyleCell $bg="#a5a5a5" $color="#fff" $bold $border="3px double #3f3f3f">Check Cell</StyleCell>
            </StyleGrid>
            <GalleryScroll>
              <GalleryStep><Tri $dir="u" $dim /></GalleryStep>
              <GalleryStep><Tri $dir="d" /></GalleryStep>
              <GalleryStep><TinyMenu /></GalleryStep>
            </GalleryScroll>
          </Gallery>
        </GroupBody>
        <GroupFoot><GroupLabel>Styles</GroupLabel></GroupFoot>
      </Group>

      <Group $w={129}>
        <GroupBody>
          <Big w={44} icon={<CellsInsert />} lines={['Insert']} />
          <Big w={38} icon={<CellsDelete />} lines={['Delete']} />
          <Big w={42} icon={<CellsFormat />} lines={['Format']} />
        </GroupBody>
        <GroupFoot><GroupLabel>Cells</GroupLabel></GroupFoot>
      </Group>

      <Group $w={177}>
        <GroupBody $pad={6}>
          <SmallCol $top={2} $w={82}>
            <SmallRow $h={21.5}><SmallIcon><Sigma /></SmallIcon>AutoSum<Caret $ml={6} /></SmallRow>
            <SmallRow $h={21.5}><SmallIcon><FillDown /></SmallIcon>Fill<Caret /></SmallRow>
            <SmallRow $h={21.5}><SmallIcon><Eraser /></SmallIcon>Clear<Caret /></SmallRow>
          </SmallCol>
          <Big w={42} h={29} iconMl={4} icon={<SortFilter />} lines={['Sort &', 'Filter']} caret />
          <Big w={40} h={29} icon={<Binoculars />} lines={['Find &', 'Select']} caret />
        </GroupBody>
        <GroupFoot><GroupLabel>Editing</GroupLabel></GroupFoot>
      </Group>
      <CollapseBox><Chevron /></CollapseBox>
    </Ribbon>

    <Qat>
      {qatItems.map((it, i) => (
        <QatItem key={i} $w={it.w} $ml={it.ml}>{it.el}</QatItem>
      ))}
    </Qat>

    <FormulaBar>
      <NameBox>A4<Caret /></NameBox>
      <Grip><Grip3 /></Grip>
      <FormulaBtns><CrossGray /><CheckGray /><FxMark>fx</FxMark></FormulaBtns>
      <FormulaInput>Team1<Chevron d="M1 1l5 4 5-4" /></FormulaInput>
    </FormulaBar>

    <SheetWrap>
      <Sheet>
        <HeadRow>
          <Corner><S w={9} h={9}><path d="M9 0v9H0z" fill="#dedede" /></S></Corner>
          {colLetters.map((c, i) => <ColHead key={i} $active={c === 'A'}>{c}</ColHead>)}
        </HeadRow>

        <Row>
          <RowHead>2</RowHead>
          <Cell $align="left" $bg="#808080" $color="#fff" $bold>
            Row Labels
            <FilterBtn><Tri $dir="d" /></FilterBtn>
          </Cell>
          {months.map(m => <Cell key={m} $bg="#808080" $color="#fff" $bold>{m}</Cell>)}
          <Cell $rule="#c6c6c6" />
          <Cell $color="#1f4e79" $bold $pr={14} $fs={12.4} $rule="#c6c6c6">Year: 2017</Cell>
          <Cell $span={3} $bg="#ffffcc" $color="#222" $align="center" $rule="#c6c6c6">Refresh pivot table by going to Data &gt;&gt; Refresh All</Cell>
          <Cell $rule="#c6c6c6" />
        </Row>
        <SummaryRow n={3} label="Active" minus vals={['12.25', '14.00', '16.75', '0.21']} />
        {sheetRows.map(r => <DataRow key={r.n} row={r} />)}
        <SummaryRow n={20} label="Pending" vals={['10.50', '12.00', '15.00', '0.21']} />
        <EmptyRows from={21} to={21} />
        <Row>
          <RowHead>22</RowHead>
          <Cell $bg="#404040" $color="#fff" $bold $pr={3} $ls={0.2}>Grand Total</Cell>
          {['22.75', '26.00', '31.75'].map(v => <Cell key={v} $bg={RED} $color="#fff" $bold>{v}</Cell>)}
          <Cell $bg={LIME} $color="#fff" $bold $pr={9}>0.42</Cell>
          <Blanks from={4} bg={LIME} />
        </Row>
        <EmptyRows from={23} to={37} />
      </Sheet>
      <VScroll>
        <ScrollBtn><Tri $dir="u" /></ScrollBtn>
        <VThumb />
        <ScrollBtn><Tri $dir="d" /></ScrollBtn>
      </VScroll>
    </SheetWrap>

    <SheetTabs>
      <TabNav><Tri $dir="l" $dim /><Tri $dir="r" $dim /></TabNav>
      {tabsData.map(t => (
        <SheetTab key={t.t} $w={t.w} $gap={t.gap} $bg={t.bg} $color={t.color} $active={t.active}>{t.t}</SheetTab>
      ))}
      <AddSheet><PlusCircle /></AddSheet>
      <HScrollArea>
        <Grip3 />
        <ScrollBtn $w={15} $h={15} $ml={13}><Tri $dir="l" /></ScrollBtn>
        <HThumb />
        <ScrollBtn $w={13} $h={15} $ml={9}><Tri $dir="r" /></ScrollBtn>
      </HScrollArea>
    </SheetTabs>

    <StatusBar>
      <ReadyText>READY</ReadyText>
      <CalcMini />
      <StatusRight>
        <ViewGroup>
          <ViewBtn $on><ViewGrid /></ViewBtn>
          <ViewBtn><ViewPage /></ViewBtn>
          <ViewBtn><ViewBreak /></ViewBtn>
        </ViewGroup>
        <ZoomSign>−</ZoomSign>
        <ZoomTrack />
        <ZoomSign>+</ZoomSign>
        <ZoomLabel>100%</ZoomLabel>
      </StatusRight>
    </StatusBar>
  </Window>
)

export default App
